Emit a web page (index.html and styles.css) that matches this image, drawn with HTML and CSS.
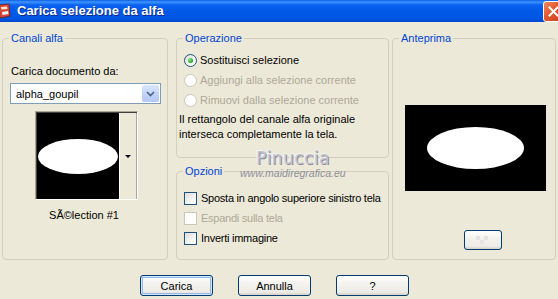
FILE: index.html
```html
<!DOCTYPE html>
<html lang="it">
  <head>
    <meta charset="UTF-8" />
    <title>Carica selezione da alfa</title>
    <link rel="stylesheet" href="styles.css">
  </head>
  <body>
    <div class="dialog">

      <div class="titlebar">
        <svg class="app-icon" width="16" height="16" viewBox="0 0 16 16">
          <path d="M3 2 L13 1 L14 13 L4 15 Z" fill="#d9463a" stroke="#7a1c14" stroke-width="0.8"/>
          <path d="M5 4 L11 3.5 L11.5 6 L5.5 6.5 Z" fill="#f6e7c8"/>
          <path d="M6 9 L12 8 L12.5 11 L6.5 12 Z" fill="#f2f2f2"/>
        </svg>
        <span class="title">Carica selezione da alfa</span>
        <span class="close">
          <svg width="11" height="11" viewBox="0 0 11 11">
            <path d="M1.5 1.5 L9.5 9.5 M9.5 1.5 L1.5 9.5" stroke="#fff" stroke-width="2" stroke-linecap="square"/>
          </svg>
        </span>
      </div>

      <div class="panes">

        <fieldset class="group channels">
          <legend>Canali alfa</legend>
          <div class="caption">Carica documento da:</div>
          <div class="combo">
            <span class="combo-value">alpha_goupil</span>
            <span class="combo-btn">
              <svg width="9" height="6" viewBox="0 0 9 6">
                <path d="M1 1 L4.5 4.5 L8 1" fill="none" stroke="#4d6185" stroke-width="1.6"/>
              </svg>
            </span>
          </div>
          <div class="thumb">
            <div class="thumb-image"><div class="blob"></div></div>
            <div class="thumb-drop"><span class="arrow"></span></div>
          </div>
          <div class="thumb-name">SÃ©lection #1</div>
        </fieldset>

        <div class="middle">
          <fieldset class="group operation">
            <legend>Operazione</legend>
            <label class="option"><span class="radio checked"></span>Sostituisci selezione</label>
            <label class="option disabled"><span class="radio"></span>Aggiungi alla selezione corrente</label>
            <label class="option disabled"><span class="radio"></span>Rimuovi dalla selezione corrente</label>
            <p class="note">Il rettangolo del canale alfa originale<br>interseca completamente la tela.</p>
          </fieldset>

          <fieldset class="group options">
            <legend>Opzioni</legend>
            <label class="option"><span class="check"></span>Sposta in angolo superiore sinistro tela</label>
            <label class="option disabled"><span class="check"></span>Espandi sulla tela</label>
            <label class="option"><span class="check"></span>Inverti immagine</label>
          </fieldset>
        </div>

        <fieldset class="group preview">
          <legend>Anteprima</legend>
          <div class="preview-image"><div class="blob big"></div></div>
          <span class="btn small">
            <svg width="14" height="8" viewBox="0 0 14 8">
              <rect x="0" y="0" width="4" height="4" fill="#e4e4e4"/>
              <rect x="4" y="4" width="4" height="4" fill="#e4e4e4"/>
              <rect x="8" y="0" width="4" height="4" fill="#e4e4e4"/>
            </svg>
          </span>
        </fieldset>

      </div>

      <div class="actions">
        <span class="btn default">Carica</span>
        <span class="btn">Annulla</span>
        <span class="btn">?</span>
      </div>

      <div class="watermark">
        <span class="wm-name">Pinuccia</span>
        <span class="wm-url">www.maidiregrafica.eu</span>
      </div>

    </div>
  </body>
</html>
```

FILE: styles.css
```css
body {
  margin: 0;
  background: #ece9d8;
  font-family: 'Liberation Sans', sans-serif;
  font-size: 11px;
  line-height: 14px;
  color: #000;
}

.dialog {
  position: relative;
  width: 558px;
  height: 299px;
  overflow: hidden;
}

/* title bar */
.titlebar {
  display: flex;
  align-items: center;
  height: 22px;
  background: linear-gradient(to bottom, #0a5de8 0%, #3f95ff 9%, #0c63f2 22%, #0058e8 50%, #0055e3 85%, #0046cc 100%);
}
.app-icon {
  margin-left: -4px;
}
.title {
  margin-left: 5px;
  font-weight: bold;
  font-size: 13px;
  color: #fff;
  text-shadow: 1px 1px 0 #0a2a8a;
}
.close {
  display: flex;
  align-items: center;
  justify-content: center;
  width: 19px;
  height: 19px;
  margin-left: auto;
  margin-right: -6px;
  border: 1px solid #fff;
  border-radius: 3px;
  background: linear-gradient(135deg, #f08a62 0%, #e2582f 45%, #c8401c 100%);
}

/* group boxes */
.panes {
  display: flex;
  padding: 9px 0 0 2px;
}
.group {
  box-sizing: border-box;
  margin: 0;
  padding: 0 4px 0 2px;
  min-width: 0;
  border: 1px solid #d0d0bf;
  border-radius: 4px;
}
.group legend {
  margin-left: 4px;
  padding: 0 2px;
  color: #0046d5;
}
.channels {
  width: 166px;
  height: 229px;
}
.middle {
  display: flex;
  flex-direction: column;
  gap: 6px;
  width: 213px;
  margin-left: 8px;
}
.operation {
  height: 127px;
  padding-top: 5px;
}
.options {
  height: 96px;
  padding-top: 10px;
}
.options .option {
  letter-spacing: -0.25px;
}
.preview {
  width: 164px;
  height: 229px;
  margin-left: 3px;
}

/* canali alfa */
.caption {
  margin: 19px 0 0 6px;
}
.combo {
  box-sizing: border-box;
  display: flex;
  align-items: center;
  width: 151px;
  height: 21px;
  margin: 5px 0 0 5px;
  padding: 1px;
  border: 1px solid #7f9db9;
  background: #fff;
}
.combo-value {
  flex: 1;
  padding-left: 4px;
}
.combo-btn {
  display: flex;
  align-items: center;
  justify-content: center;
  width: 17px;
  height: 17px;
  border-radius: 2px;
  background: linear-gradient(to bottom, #dbe6fd 0%, #c3d4fb 50%, #b3c7f5 100%);
}
.thumb {
  box-sizing: border-box;
  display: flex;
  width: 103px;
  height: 89px;
  margin: 7px 0 0 30px;
  border: 1px solid;
  border-color: #aca899 #fff #fff #aca899;
  box-shadow: inset 1px 1px 0 #404040;
  padding: 1px 0 0 1px;
}
.thumb-image {
  display: flex;
  align-items: center;
  justify-content: center;
  flex: 1;
  background: #000;
}
.blob {
  width: 80px;
  height: 35px;
  border-radius: 50%;
  background: #fff;
}
.thumb-drop {
  display: flex;
  align-items: center;
  justify-content: center;
  width: 16px;
  border-left: 1px solid #fff;
  border-right: 1px solid #aca899;
  background: #ece9d8;
}
.arrow {
  width: 0;
  height: 0;
  border-left: 3px solid transparent;
  border-right: 3px solid transparent;
  border-top: 3px solid #000;
}
.thumb-name {
  margin-top: 8px;
  text-align: center;
}

/* radios and checks */
.option {
  display: flex;
  align-items: center;
  height: 20px;
  padding-left: 5px;
  white-space: nowrap;
}
.option.disabled {
  color: #aca899;
}
.radio {
  box-sizing: border-box;
  display: flex;
  flex-shrink: 0;
  align-items: center;
  justify-content: center;
  width: 13px;
  height: 13px;
  margin-right: 3px;
  border: 1px solid #1c5180;
  border-radius: 50%;
  background: linear-gradient(135deg, #dcdcd7 0%, #fff 80%);
}
.radio.checked::after {
  content: '';
  width: 5px;
  height: 5px;
  border-radius: 50%;
  background: radial-gradient(circle at 35% 35%, #8ee68e 0%, #21a121 70%);
}
.disabled .radio,
.disabled .check {
  border-color: #cac8bb;
  background: #fff;
}
.check {
  box-sizing: border-box;
  flex-shrink: 0;
  width: 13px;
  height: 13px;
  margin-right: 4px;
  border: 1px solid #1c5180;
  background: linear-gradient(135deg, #dcdcd7 0%, #fff 85%);
}
.note {
  margin: 2px 0 0;
  line-height: 15px;
}

/* anteprima */
.preview-image {
  display: flex;
  align-items: center;
  justify-content: center;
  width: 141px;
  height: 86px;
  margin: 60px 0 0 10px;
  background: #000;
}
.blob.big {
  width: 97px;
  height: 42px;
}

/* buttons */
.btn {
  box-sizing: border-box;
  display: flex;
  align-items: center;
  justify-content: center;
  width: 73px;
  height: 21px;
  border: 1px solid #003c74;
  border-radius: 3px;
  background: linear-gradient(to bottom, #fff 0%, #f4f3ee 40%, #ecebe6 85%, #d6d0c5 100%);
}
.btn.default {
  box-shadow: inset 0 0 0 1px #cee7ff, inset 0 0 0 2px #98b8ea;
}
.btn.small {
  width: 38px;
  height: 20px;
  margin: 39px 0 0 69px;
}
.actions {
  display: flex;
  gap: 25px;
  margin-top: 15px;
  padding-left: 140px;
}

/* watermark over the dialog */
.watermark {
  position: absolute;
  left: 240px;
  top: 150px;
  width: 120px;
  pointer-events: none;
}
.wm-name {
  display: block;
  margin-left: 16px;
  font-family: 'DejaVu Sans', sans-serif;
  font-size: 17px;
  line-height: 17px;
  color: #c4c4d0;
  text-shadow: 1px 1px 0 #8c8c98, -1px -1px 0 #f4f4f8;
  letter-spacing: 0.5px;
}
.wm-url {
  display: block;
  font-style: italic;
  font-size: 10.5px;
  line-height: 12px;
  color: #8e8e9a;
}
```
